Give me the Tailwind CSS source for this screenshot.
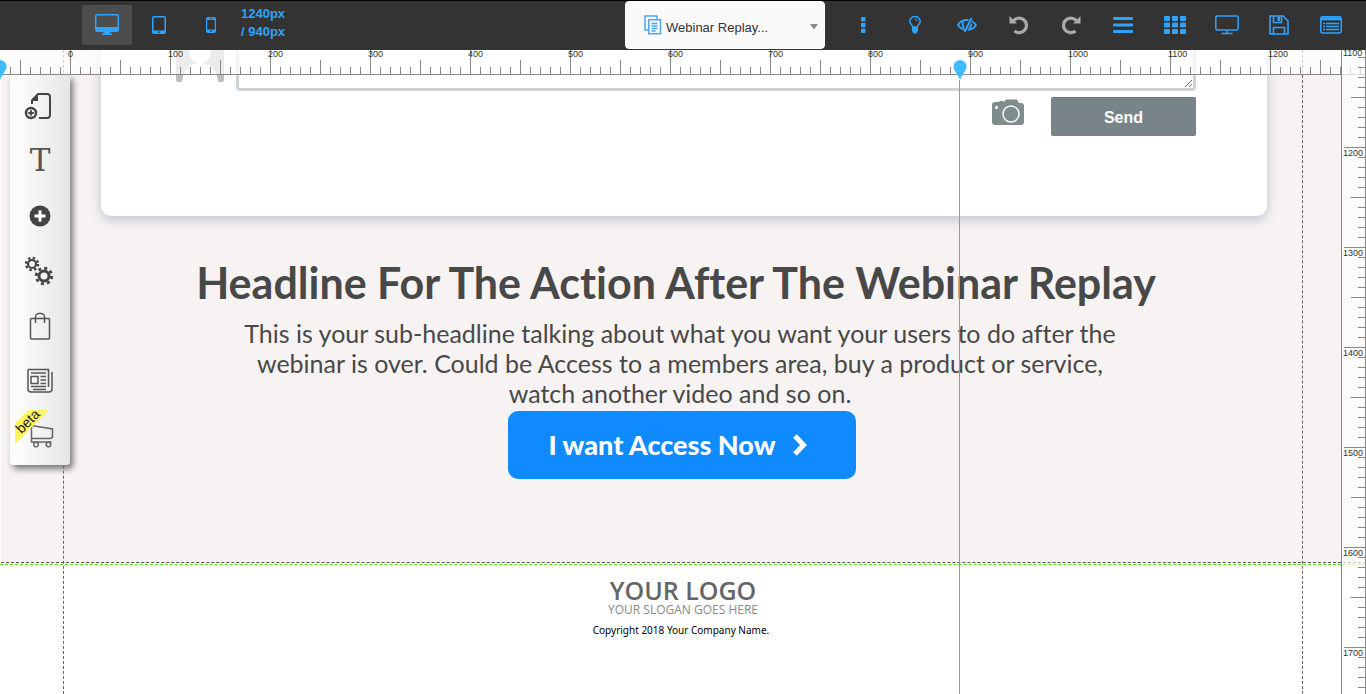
<!DOCTYPE html>
<html lang="en">

<head>
	<meta charset="UTF-8" />
	<meta name="viewport" content="width=device-width, initial-scale=1.0" />
	<script src="https://cdn.jsdelivr.net/npm/@tailwindcss/browser@4"></script>
	<title>Page Builder</title>
</head>

<body class="h-screen flex flex-col overflow-hidden bg-white font-['Liberation_Sans',sans-serif] text-[#484848]">
	<!-- Top bar -->
	<header class="relative z-40 flex items-center justify-between h-[50px] shrink-0 bg-[#333] border-t border-black pb-px text-[#2ea3ff]">
		<div class="flex items-center pl-[82px]">
			<button aria-label="Desktop" class="flex items-center justify-center w-[50px] h-10 rounded-xs bg-[#4d4d4d]">
				<svg width="24" height="22" viewBox="0 0 24 22" fill="currentColor">
					<path fill-rule="evenodd" d="M2 0h20a2 2 0 0 1 2 2v14a2 2 0 0 1-2 2h-6.500v1.500H17V21H7v-1.500h1.500V18H2a2 2 0 0 1-2-2V2a2 2 0 0 1 2-2ZM1.500 2v11h21V2a.5.5 0 0 0-.5-.5H2a.5.5 0 0 0-.5.5Z" />
				</svg>
			</button>
			<button aria-label="Tablet" class="flex items-center justify-center w-[54px] h-10">
				<svg width="14" height="18" viewBox="0 0 14 18" fill="currentColor">
					<path fill-rule="evenodd" d="M2 0h10a2 2 0 0 1 2 2v14a2 2 0 0 1-2 2H2a2 2 0 0 1-2-2V2a2 2 0 0 1 2-2ZM1.500 1.500v13h11v-13ZM6 15.500v1.200h2v-1.200Z" />
				</svg>
			</button>
			<button aria-label="Phone" class="flex items-center justify-center w-[50px] h-10">
				<svg width="10" height="16" viewBox="0 0 10 16" fill="currentColor">
					<path fill-rule="evenodd" d="M2 0h6a2 2 0 0 1 2 2v12a2 2 0 0 1-2 2H2a2 2 0 0 1-2-2V2a2 2 0 0 1 2-2ZM1.200 3v9.500h7.600V3ZM3.500 1.200v.8h3v-.8ZM4 13.500v1.200h2v-1.200Z" />
				</svg>
			</button>
			<p class="w-[60px] pl-[5px] text-[13px] leading-[18px] -mt-1 font-bold">1240px<br>/ 940px</p>
		</div>

		<div class="absolute left-[625px] top-0 flex items-center w-[200px] h-12 rounded-sm bg-[#fafafa] border border-white text-[#333] pl-[18px] pr-[6px]">
			<svg width="18" height="20" viewBox="0 0 18 20" fill="none" stroke="#4aa8f8" stroke-width="1.500">
				<path d="M4.500 15H1V1h12v3" />
				<path d="M4.800 4.800h11.700v14H4.800Z" />
				<path d="M7.500 8.500h6M7.500 11h6M7.500 13.500h6M7.500 16h4" />
			</svg>
			<select aria-label="Page" class="flex-1 appearance-none text-[13px] leading-5 ml-1 mt-[5px]">
				<option>Webinar Replay...</option>
			</select>
			<svg width="8" height="6" viewBox="0 0 8 6" fill="#888" class="mt-1 pointer-events-none"><path d="M0 0h8L4 5.500Z" /></svg>
		</div>

		<nav class="flex items-center pr-[9px]">
			<button aria-label="More" class="flex items-center justify-center w-[52px] h-10">
				<svg width="5" height="16" viewBox="0 0 5 16" fill="currentColor">
					<rect width="4.500" height="4.500" rx="1" />
					<rect y="5.700" width="4.500" height="4.500" rx="1" />
					<rect y="11.400" width="4.500" height="4.500" rx="1" />
				</svg>
			</button>
			<button aria-label="Tips" class="flex items-center justify-center w-[52px] h-10">
				<svg width="12" height="18" viewBox="0 0 12 18" fill="none" stroke="currentColor" stroke-width="1.500">
					<path d="M4 11.500C4 9 .8 8.500.8 5.500a5.200 5 0 0 1 10.400 0C11.200 8.500 8 9 8 11.500Z" />
					<path d="M6 3.200c1.500 0 2.300.8 2.300 2" stroke-width="1" />
					<path d="M3 10.500h6v4.500L7.500 17.500h-3L3 15Z" fill="currentColor" stroke="none" />
				</svg>
			</button>
			<button aria-label="Hidden items" class="flex items-center justify-center w-[52px] h-10">
				<svg width="20" height="16" viewBox="0 0 20 16" fill="none" stroke="currentColor" stroke-width="1.800">
					<path d="M8.500 12.800C5 12.300 2.500 10.300 1 8c2-3.200 5.200-5 9-5l1.500.2" />
					<path d="M14.800 4.200C16.700 5.100 18 6.500 19 8c-1.800 2.800-4.500 4.600-8 4.900" />
					<path d="M6.500 5.200a4.500 4.500 0 0 0 .8 5.700M14.200 6.500c.4 2.300-.7 4.300-2.500 5" />
					<path d="m14.500 1-6.800 14" stroke-width="2" />
				</svg>
			</button>
			<button aria-label="Undo" class="flex items-center justify-center w-[52px] h-10 text-[#aaa]">
				<svg width="20" height="20" viewBox="0 0 20 20" fill="none" stroke="currentColor" stroke-width="3.200">
					<path d="M4 6.500A7.300 7.300 0 1 1 5.500 16" />
					<path d="M.5 1v7.500H8Z" fill="currentColor" stroke="none" />
				</svg>
			</button>
			<button aria-label="Redo" class="flex items-center justify-center w-[52px] h-10 text-[#aaa]">
				<svg width="20" height="20" viewBox="0 0 20 20" fill="none" stroke="currentColor" stroke-width="3.200">
					<path d="M16 6.500A7.300 7.300 0 1 0 14.500 16" />
					<path d="M19.500 1v7.500H12Z" fill="currentColor" stroke="none" />
				</svg>
			</button>
			<button aria-label="Menu" class="flex items-center justify-center w-[52px] h-10">
				<svg width="20" height="16" viewBox="0 0 20 16" fill="currentColor">
					<rect width="20" height="3" rx="1" />
					<rect y="6.500" width="20" height="3" rx="1" />
					<rect y="13" width="20" height="3" rx="1" />
				</svg>
			</button>
			<button aria-label="Grid" class="flex items-center justify-center w-[52px] h-10">
				<svg width="22" height="18" viewBox="0 0 22 18" fill="currentColor">
					<rect width="6" height="5" rx="1" /><rect x="8" width="6" height="5" rx="1" /><rect x="16" width="6" height="5" rx="1" />
					<rect y="6.500" width="6" height="5" rx="1" /><rect x="8" y="6.500" width="6" height="5" rx="1" /><rect x="16" y="6.500" width="6" height="5" rx="1" />
					<rect y="13" width="6" height="5" rx="1" /><rect x="8" y="13" width="6" height="5" rx="1" /><rect x="16" y="13" width="6" height="5" rx="1" />
				</svg>
			</button>
			<button aria-label="Preview" class="flex items-center justify-center w-[52px] h-10">
				<svg width="24" height="20" viewBox="0 0 24 20" fill="none" stroke="currentColor" stroke-width="1.500">
					<rect x=".8" y="1" width="22.400" height="14" rx="1.500" />
					<path d="M12 15v3M6.500 18.500h11" />
				</svg>
			</button>
			<button aria-label="Save" class="flex items-center justify-center w-[52px] h-10">
				<svg width="20" height="20" viewBox="0 0 20 20" fill="none" stroke="currentColor" stroke-width="1.600">
					<path d="M1 1h13l5 5v13H1Z" />
					<path d="M4.500 1v6.500h8V1M4.500 19v-6.500h11V19" />
					<path d="M8.500 1.500h2.500v4.500H8.500Z" fill="currentColor" stroke="none" />
				</svg>
			</button>
			<button aria-label="Page list" class="flex items-center justify-center w-[52px] h-10">
				<svg width="22" height="18" viewBox="0 0 22 18" fill="none" stroke="currentColor" stroke-width="1.500">
					<rect x=".8" y=".8" width="20.400" height="16.200" rx="2" />
					<path d="M1 2.800h20" stroke-width="3" />
					<path d="M3 7.500h2M6 7.500h13M3 10.500h2M6 10.500h13M3 13.500h2M6 13.500h13" />
				</svg>
			</button>
		</nav>
	</header>

	<div class="relative flex-1 overflow-hidden">
		<!-- Page being edited -->
		<main>
			<section class="bg-[#f7f3f2] border-b border-dashed border-[#555] h-[513px] ml-px">
				<div class="ml-[100px] mr-[99px] h-[166px] bg-white rounded-b-[10px] shadow-[0_4px_12px_#bcc3cf]">
					<div class="flex justify-between pl-[75px] pr-[71px]">
						<svg width="48" height="32" viewBox="0 0 48 32" class="rounded-b-xs">
							<path d="M0 0h48v32H0Z" fill="#bdbdbf" />
							<circle cx="24" cy="2" r="11" fill="#fff" />
							<path d="M6 32c1-12 7-19 18-19s17 7 18 19Z" fill="#fff" />
						</svg>
						<textarea aria-label="Comment" class="flex-1 ml-3 h-[41px] border-3 border-t-0 border-[#ced3d8] rounded-b-sm bg-white"></textarea>
					</div>
					<div class="flex justify-end gap-[27px] pr-[71px] mt-[6px]">
						<button aria-label="Add photo" class="self-start mt-[2px]">
							<svg width="32" height="27" viewBox="0 0 32 27" class="block">
								<path d="M3 3h4l1-1h3l1 1 2-2.500h11L27 4h2a3 3 0 0 1 3 3v16a3 3 0 0 1-3 3H3a3 3 0 0 1-3-3V6a3 3 0 0 1 3-3Z" fill="#7f8c8d" />
								<circle cx="19" cy="15" r="8" fill="none" stroke="#fff" stroke-width="1.500" />
								<circle cx="4.500" cy="8.500" r="1.500" fill="#fff" />
							</svg>
						</button>
						<button class="w-[145px] h-[39px] pt-px rounded-xs bg-[#798489] border-t border-[#69757b] text-white text-base font-bold">Send</button>
					</div>
				</div>

				<div class="flex flex-col items-center pt-[42px] pr-[3px] text-center font-[Lato,sans-serif] [font-variant-ligatures:none]">
					<h1 class="pr-3 text-[43px] leading-[50px] font-bold whitespace-nowrap">Headline For The Action After The Webinar Replay</h1>
					<p class="pr-1 mt-[10px] text-[25px] leading-[30px] whitespace-nowrap">This is your sub-headline talking about what you want your users to do after the<br>webinar is over. Could be Access to a members area, buy a product or service,<br>watch another video and so on.</p>
					<button class="flex items-center justify-center gap-4 w-[348px] h-[68px] mt-[3px] pr-2 rounded-[10px] bg-[#0f8bff] text-white text-[27px] font-black">
						I want Access Now
						<svg width="16" height="24" viewBox="0 0 16 24" fill="none" stroke="currentColor" stroke-width="5"><path d="m3 3 8.500 9L3 21" /></svg>
					</button>
				</div>
			</section>
			<footer class="flex flex-col items-center mt-px pt-3 border-t border-dashed border-[#55e600] font-['Open_Sans',sans-serif]">
				<p class="text-[25px] leading-[26px] font-semibold text-[#666]">YOUR LOGO</p>
				<p class="text-[12px] leading-[14px] text-[#888]">YOUR SLOGAN GOES HERE</p>
				<p class="pr-1 mt-[5px] font-['Noto_Sans',sans-serif] text-[10px] leading-4 text-black">Copyright 2018 Your Company Name.</p>
			</footer>
		</main>

		<!-- Content guides -->
		<div class="absolute inset-y-0 left-[63px] right-[63px] border-x border-dashed border-[#666]"></div>

		<!-- Horizontal ruler -->
		<div class="absolute inset-x-0 top-0 h-[25px] bg-white/70 border-b border-[#888] overflow-hidden">
			<svg width="100%" height="24" class="absolute inset-0">
				<defs>
					<pattern id="ticks-x" x="70" width="100" height="24" patternUnits="userSpaceOnUse">
						<path d="M.5 0v24M50.500 10v14M10.500 17v7M20.500 17v7M30.500 17v7M40.500 17v7M60.500 17v7M70.500 17v7M80.500 17v7M90.500 17v7" stroke="#888" />
					</pattern>
				</defs>
				<rect width="100%" height="24" fill="url(#ticks-x)" />
			</svg>
			<div class="relative flex pl-[68px] text-[9px] leading-[8px] text-[#333] *:w-[100px] *:shrink-0">
				<span>0</span><span>100</span><span>200</span><span>300</span><span>400</span><span>500</span><span>600</span><span>700</span><span>800</span><span>900</span><span>1000</span><span>1100</span><span>1200</span>
			</div>
		</div>

		<!-- Vertical ruler -->
		<div class="absolute inset-y-0 right-0 w-[25px] bg-white/70 border-l border-r border-[#888] overflow-hidden">
			<svg width="24" height="100%" class="absolute inset-0">
				<defs>
					<pattern id="ticks-y" y="97" width="24" height="100" patternUnits="userSpaceOnUse">
						<path d="M2 .5h22M9 50.500h15M16 10.500h8M16 20.500h8M16 30.500h8M16 40.500h8M16 60.500h8M16 70.500h8M16 80.500h8M16 90.500h8" stroke="#888" />
					</pattern>
				</defs>
				<rect width="24" height="100%" fill="url(#ticks-y)" />
			</svg>
			<div class="relative flex flex-col -mt-[2px] pl-px text-[9px] leading-[10px] text-[#333] *:h-[100px] *:shrink-0">
				<span>1100</span><span>1200</span><span>1300</span><span>1400</span><span>1500</span><span>1600</span><span>1700</span>
			</div>
		</div>

		<!-- Guide pins -->
		<svg width="14" height="20" viewBox="0 0 14 20" class="absolute -left-[7px] top-[10px]" fill="#3fbcff"><path d="M7 0a6.500 6.500 0 0 1 6.500 6.500C13.500 11 9 14 7 20 5 14 .5 11 .5 6.500A6.500 6.500 0 0 1 7 0Z" /></svg>
		<div class="absolute left-[952px] top-[10px] bottom-0 flex flex-col items-center w-[15px]">
			<svg width="14" height="20" viewBox="0 0 14 20" class="shrink-0" fill="#3fbcff"><path d="M7 0a6.500 6.500 0 0 1 6.500 6.500C13.500 11 9 14 7 20 5 14 .5 11 .5 6.500A6.500 6.500 0 0 1 7 0Z" /></svg>
			<div class="flex-1 w-px bg-[#999]"></div>
		</div>

		<!-- Widget panel -->
		<aside class="absolute left-[10px] top-[25px] flex flex-col w-[60px] h-[390px] pt-[3px] rounded-b-sm bg-linear-to-r from-white to-[#e6e6e6] shadow-[3px_4px_6px_#777] *:flex *:items-center *:justify-center *:h-[55px] *:w-full">
			<button aria-label="Add section" class="pr-[5px]">
				<svg width="28" height="28" viewBox="0 0 28 28" fill="none" stroke="#444" stroke-width="2">
					<path d="M8 12V8.500L14 2h9a3 3 0 0 1 3 3v18a3 3 0 0 1-3 3h-8" />
					<path d="M14 2v7H7Z" fill="#444" stroke="none" />
					<circle cx="7" cy="21" r="5" stroke-width="2.400" />
					<path d="M7 18.200v5.600M4.200 21h5.600" stroke-width="1.800" />
				</svg>
			</button>
			<button aria-label="Text" class="font-['DejaVu_Serif',serif] text-[31px] text-[#555]">T</button>
			<button aria-label="Add element">
				<svg width="22" height="22" viewBox="0 0 22 22"><circle cx="11" cy="11" r="10.500" fill="#444" /><path d="M11 5.500v11M5.500 11h11" stroke="#fff" stroke-width="3" /></svg>
			</button>
			<button aria-label="Settings" class="pr-[2px]">
				<svg width="28" height="30" viewBox="0 0 28 30" fill="none" stroke="#444">
					<circle cx="7" cy="8" r="4" stroke-width="2.200" />
					<circle cx="7" cy="8" r="6" stroke-width="2.400" stroke-dasharray="2.400 2.312" />
					<circle cx="19" cy="20" r="5" stroke-width="3" />
					<circle cx="19" cy="20" r="7.800" stroke-width="2.800" stroke-dasharray="3 3.126" />
				</svg>
			</button>
			<button aria-label="Shop">
				<svg width="22" height="28" viewBox="0 0 22 28" fill="none" stroke="#555" stroke-width="1.500">
					<rect x="1.500" y="6.500" width="19" height="20.500" rx="1" />
					<path d="M6.500 11V5a3.500 3.500 0 0 1 3.500-3.500h2A3.500 3.500 0 0 1 15.500 5v6" />
				</svg>
			</button>
			<button aria-label="Blog">
				<svg width="26" height="26" viewBox="0 0 26 26" fill="none" stroke="#555" stroke-width="1.500">
					<path d="M1 1.500h20.500V19M1 1.500V21a3 3 0 0 0 3 3h18a3 3 0 0 0 3-3V4" />
					<path d="M4 5h15M4 8.500h7v7H4ZM13.500 8.500h5.500M13.500 12h5.500M13.500 15.500h5.500M4 18.500h15M6 21.500h13" />
				</svg>
			</button>
			<button aria-label="Store" class="relative pl-1">
				<svg width="24" height="24" viewBox="0 0 24 24" fill="none" stroke="#666" stroke-width="1.500">
					<path d="M1.500 1.500 22.500 5v8.500L20 14.500H1.500ZM1.500 14v4h20" />
					<circle cx="6" cy="20.500" r="2.300" /><circle cx="18.500" cy="20.500" r="2.300" />
				</svg>
				<span class="absolute left-[5px] top-[2px] w-[34px] h-[34px] bg-[#fff45c] [clip-path:polygon(0_40%,40%_0,100%_0,0_100%)]"></span>
				<span class="absolute left-[4px] top-[5px] -rotate-45 text-[14px] leading-4 text-[#222]">beta</span>
			</button>
		</aside>
	</div>
</body>

</html>
